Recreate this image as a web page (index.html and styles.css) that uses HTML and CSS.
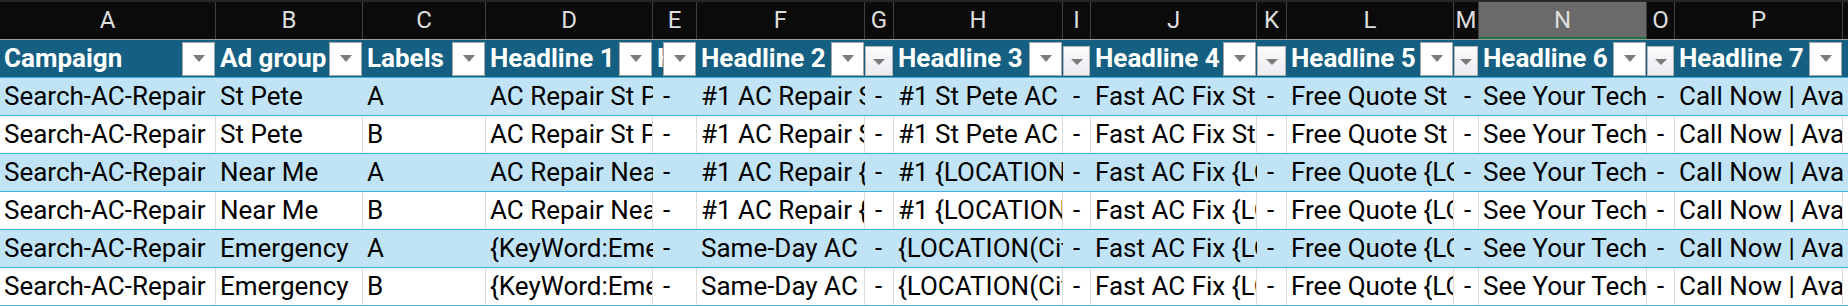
FILE: index.html
```html
<!DOCTYPE html>
<html>
<head>
<meta charset="utf-8">
<link rel="stylesheet" href="styles.css">
</head>
<body>
<div class="sheet">
  <div class="topbar"></div>
  <div class="letters">
    <div class="letter">A</div><div class="letter">B</div><div class="letter">C</div><div class="letter">D</div>
    <div class="letter">E</div><div class="letter">F</div><div class="letter">G</div><div class="letter">H</div>
    <div class="letter">I</div><div class="letter">J</div><div class="letter">K</div><div class="letter">L</div>
    <div class="letter">M</div><div class="letter sel">N</div><div class="letter">O</div><div class="letter">P</div>
    <div class="letter">Q</div>
  </div>

  <div class="row head">
    <div class="hcell"><span class="hlabel">Campaign</span><span class="filter"></span></div>
    <div class="hcell"><span class="hlabel">Ad group</span><span class="filter"></span></div>
    <div class="hcell"><span class="hlabel">Labels</span><span class="filter"></span></div>
    <div class="hcell"><span class="hlabel">Headline 1</span><span class="filter"></span></div>
    <div class="hcell"><span class="hlabel">Headline 1 position</span><span class="filter"></span></div>
    <div class="hcell"><span class="hlabel">Headline 2</span><span class="filter"></span></div>
    <div class="hcell narrow"><span class="filter small"></span></div>
    <div class="hcell"><span class="hlabel">Headline 3</span><span class="filter"></span></div>
    <div class="hcell narrow"><span class="filter small"></span></div>
    <div class="hcell"><span class="hlabel">Headline 4</span><span class="filter"></span></div>
    <div class="hcell narrow"><span class="filter small"></span></div>
    <div class="hcell"><span class="hlabel">Headline 5</span><span class="filter"></span></div>
    <div class="hcell narrow"><span class="filter small"></span></div>
    <div class="hcell"><span class="hlabel">Headline 6</span><span class="filter"></span></div>
    <div class="hcell narrow"><span class="filter small"></span></div>
    <div class="hcell"><span class="hlabel">Headline 7</span><span class="filter"></span></div>
    <div class="hcell"></div>
  </div>

  <div class="row band">
    <div class="cell">Search-AC-Repair</div><div class="cell">St Pete</div><div class="cell">A</div>
    <div class="cell">AC Repair St Pete</div><div class="cell dash">-</div>
    <div class="cell">#1 AC Repair St Pete</div><div class="cell dash">-</div>
    <div class="cell">#1 St Pete AC Tech</div><div class="cell dash">-</div>
    <div class="cell">Fast AC Fix St Pete</div><div class="cell dash">-</div>
    <div class="cell">Free Quote St Pete</div><div class="cell dash">-</div>
    <div class="cell">See Your Tech Before</div><div class="cell dash">-</div>
    <div class="cell">Call Now | Available 24/7</div><div class="cell dash">-</div>
  </div>
  <div class="row plain">
    <div class="cell">Search-AC-Repair</div><div class="cell">St Pete</div><div class="cell">B</div>
    <div class="cell">AC Repair St Pete</div><div class="cell dash">-</div>
    <div class="cell">#1 AC Repair St Pete</div><div class="cell dash">-</div>
    <div class="cell">#1 St Pete AC Tech</div><div class="cell dash">-</div>
    <div class="cell">Fast AC Fix St Pete</div><div class="cell dash">-</div>
    <div class="cell">Free Quote St Pete</div><div class="cell dash">-</div>
    <div class="cell">See Your Tech Before</div><div class="cell dash">-</div>
    <div class="cell">Call Now | Available 24/7</div><div class="cell dash">-</div>
  </div>
  <div class="row band">
    <div class="cell">Search-AC-Repair</div><div class="cell">Near Me</div><div class="cell">A</div>
    <div class="cell">AC Repair Near Me</div><div class="cell dash">-</div>
    <div class="cell">#1 AC Repair {LOCATION(City)}</div><div class="cell dash">-</div>
    <div class="cell">#1 {LOCATION(City)} AC Tech</div><div class="cell dash">-</div>
    <div class="cell">Fast AC Fix {LOCATION(City)}</div><div class="cell dash">-</div>
    <div class="cell">Free Quote {LOCATION(City)}</div><div class="cell dash">-</div>
    <div class="cell">See Your Tech Before</div><div class="cell dash">-</div>
    <div class="cell">Call Now | Available 24/7</div><div class="cell dash">-</div>
  </div>
  <div class="row plain">
    <div class="cell">Search-AC-Repair</div><div class="cell">Near Me</div><div class="cell">B</div>
    <div class="cell">AC Repair Near Me</div><div class="cell dash">-</div>
    <div class="cell">#1 AC Repair {LOCATION(City)}</div><div class="cell dash">-</div>
    <div class="cell">#1 {LOCATION(City)} AC Tech</div><div class="cell dash">-</div>
    <div class="cell">Fast AC Fix {LOCATION(City)}</div><div class="cell dash">-</div>
    <div class="cell">Free Quote {LOCATION(City)}</div><div class="cell dash">-</div>
    <div class="cell">See Your Tech Before</div><div class="cell dash">-</div>
    <div class="cell">Call Now | Available 24/7</div><div class="cell dash">-</div>
  </div>
  <div class="row band">
    <div class="cell">Search-AC-Repair</div><div class="cell">Emergency</div><div class="cell">A</div>
    <div class="cell">{KeyWord:Emergency AC}</div><div class="cell dash">-</div>
    <div class="cell">Same-Day AC Repair</div><div class="cell dash">-</div>
    <div class="cell">{LOCATION(City)} AC Pros</div><div class="cell dash">-</div>
    <div class="cell">Fast AC Fix {LOCATION(City)}</div><div class="cell dash">-</div>
    <div class="cell">Free Quote {LOCATION(City)}</div><div class="cell dash">-</div>
    <div class="cell">See Your Tech Before</div><div class="cell dash">-</div>
    <div class="cell">Call Now | Available 24/7</div><div class="cell dash">-</div>
  </div>
  <div class="row plain">
    <div class="cell">Search-AC-Repair</div><div class="cell">Emergency</div><div class="cell">B</div>
    <div class="cell">{KeyWord:Emergency AC}</div><div class="cell dash">-</div>
    <div class="cell">Same-Day AC Repair</div><div class="cell dash">-</div>
    <div class="cell">{LOCATION(City)} AC Pros</div><div class="cell dash">-</div>
    <div class="cell">Fast AC Fix {LOCATION(City)}</div><div class="cell dash">-</div>
    <div class="cell">Free Quote {LOCATION(City)}</div><div class="cell dash">-</div>
    <div class="cell">See Your Tech Before</div><div class="cell dash">-</div>
    <div class="cell">Call Now | Available 24/7</div><div class="cell dash">-</div>
  </div>
</div>
</body>
</html>
```

FILE: styles.css
```css
:root {
  --cols: 216px 147px 123px 167px 44px 168px 29px 169px 28px 166px 30px 167px 25px 168px 28px 168px 44px;
}
html, body {
  margin: 0;
  padding: 0;
  background: #ffffff;
  overflow: hidden;
}
body {
  font-family: Roboto, "Liberation Sans", sans-serif;
}
.sheet {
  width: 1848px;
  height: 306px;
  overflow: hidden;
}
.topbar {
  height: 2px;
  background: #262626;
}
.letters {
  display: grid;
  grid-template-columns: var(--cols);
  height: 38px;
  box-sizing: border-box;
  background: #0b0b0b;
  border-bottom: 1px solid #9b9b9b;
}
.letter {
  border-right: 1px solid #3f3f3f;
  color: #dedede;
  font-size: 24px;
  line-height: 37px;
  text-align: center;
  overflow: hidden;
}
.letter.sel {
  background: #6a6a6a;
  box-shadow: inset 0 -2px 0 #217346;
}
.row {
  display: grid;
  grid-template-columns: var(--cols);
  height: 38px;
  box-sizing: border-box;
  border-bottom: 1px solid #45b0e1;
}
.head {
  background: #156082;
}
.band {
  background: #c0e4f5;
}
.plain {
  background: #ffffff;
}
.cell {
  box-sizing: border-box;
  overflow: hidden;
  white-space: nowrap;
  padding-left: 4px;
  font-size: 26px;
  line-height: 37px;
  color: #000000;
}
.plain .cell {
  border-right: 1px solid #dcdcdc;
}
.cell.dash {
  padding-left: 10px;
}
.hcell {
  display: flex;
  align-items: center;
  padding-left: 4px;
  box-sizing: border-box;
  overflow: hidden;
}
.hcell.narrow {
  padding-left: 0;
}
.hlabel {
  flex: 1 1 auto;
  min-width: 0;
  overflow: hidden;
  white-space: nowrap;
  color: #ffffff;
  font-weight: 700;
  font-size: 26px;
  line-height: 37px;
}
.filter {
  flex: 0 0 auto;
  width: 33px;
  height: 34px;
  margin-right: 1px;
  box-sizing: border-box;
  border: 1px solid #a6a6a6;
  background: #ffffff;
  display: flex;
  align-items: center;
  justify-content: center;
}
.filter::after {
  content: "";
  width: 0;
  height: 0;
  border-left: 6.5px solid transparent;
  border-right: 6.5px solid transparent;
  border-top: 7px solid #7b7b7b;
}
.filter.small {
  flex: 1 1 auto;
  width: auto;
  height: 30px;
  align-self: flex-end;
  margin-bottom: 1px;
  background: linear-gradient(#fbfbfd, #ececf1);
  border-color: #b4b4b4;
}
.filter.small::after {
  border-left-width: 6px;
  border-right-width: 6px;
  border-top-width: 6px;
  margin-top: 2px;
}
```
